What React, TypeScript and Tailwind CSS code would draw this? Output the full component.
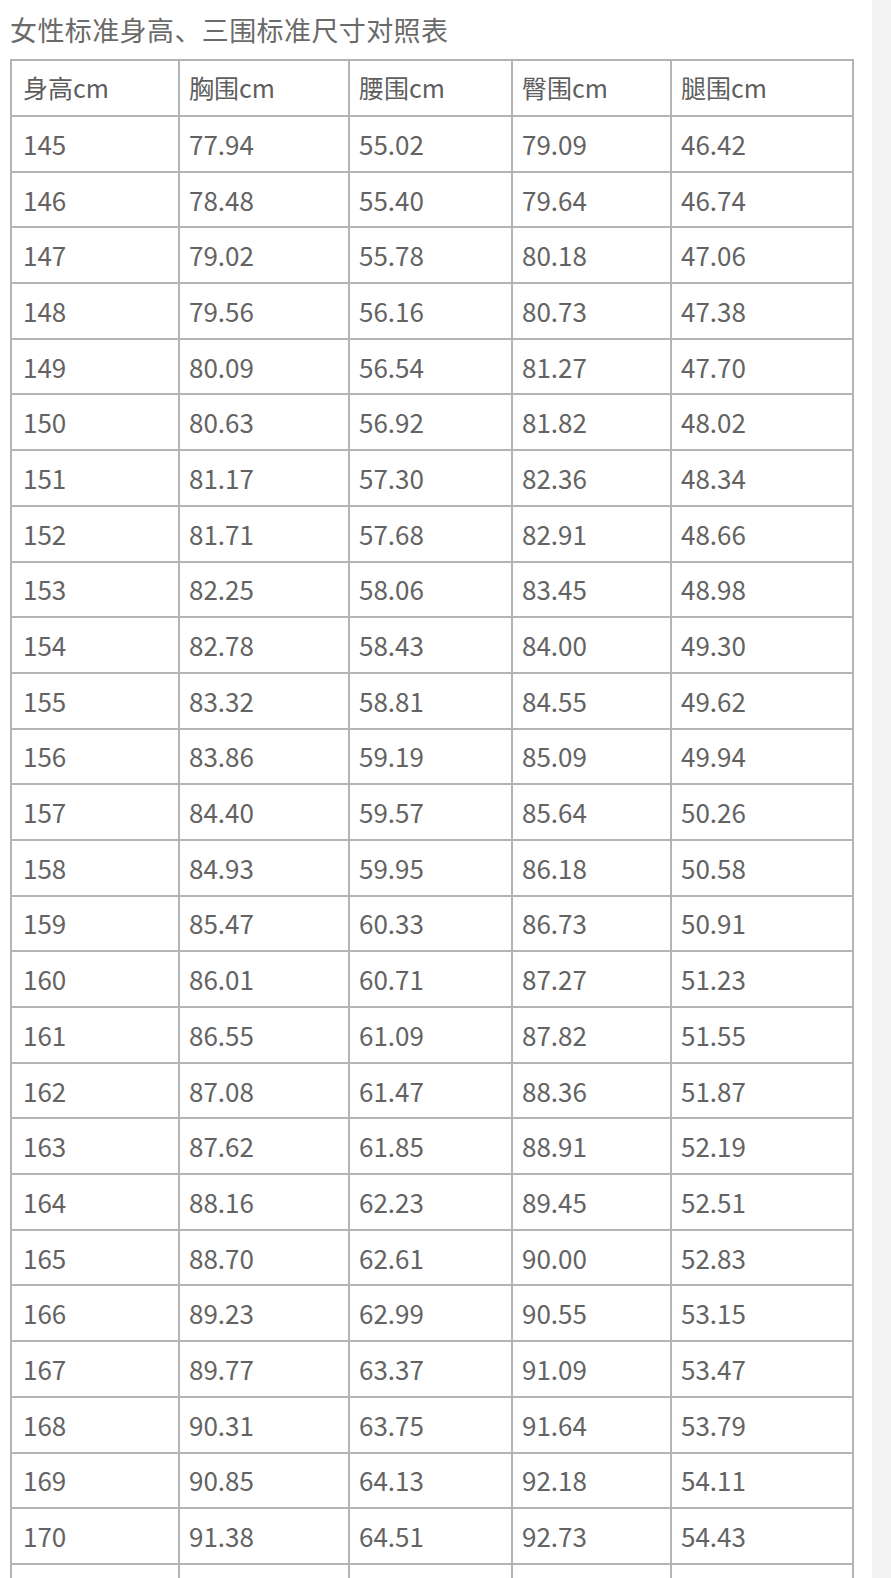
import React from "react";

const rows: string[][] = [
  ["145", "77.94", "55.02", "79.09", "46.42"],
  ["146", "78.48", "55.40", "79.64", "46.74"],
  ["147", "79.02", "55.78", "80.18", "47.06"],
  ["148", "79.56", "56.16", "80.73", "47.38"],
  ["149", "80.09", "56.54", "81.27", "47.70"],
  ["150", "80.63", "56.92", "81.82", "48.02"],
  ["151", "81.17", "57.30", "82.36", "48.34"],
  ["152", "81.71", "57.68", "82.91", "48.66"],
  ["153", "82.25", "58.06", "83.45", "48.98"],
  ["154", "82.78", "58.43", "84.00", "49.30"],
  ["155", "83.32", "58.81", "84.55", "49.62"],
  ["156", "83.86", "59.19", "85.09", "49.94"],
  ["157", "84.40", "59.57", "85.64", "50.26"],
  ["158", "84.93", "59.95", "86.18", "50.58"],
  ["159", "85.47", "60.33", "86.73", "50.91"],
  ["160", "86.01", "60.71", "87.27", "51.23"],
  ["161", "86.55", "61.09", "87.82", "51.55"],
  ["162", "87.08", "61.47", "88.36", "51.87"],
  ["163", "87.62", "61.85", "88.91", "52.19"],
  ["164", "88.16", "62.23", "89.45", "52.51"],
  ["165", "88.70", "62.61", "90.00", "52.83"],
  ["166", "89.23", "62.99", "90.55", "53.15"],
  ["167", "89.77", "63.37", "91.09", "53.47"],
  ["168", "90.31", "63.75", "91.64", "53.79"],
  ["169", "90.85", "64.13", "92.18", "54.11"],
  ["170", "91.38", "64.51", "92.73", "54.43"],
  ["", "", "", "", ""],
];

const headers = ["身高cm", "胸围cm", "腰围cm", "臀围cm", "腿围cm"];

export default function App() {
  return (
    <div
      className="flex h-[1578px] w-[891px] overflow-hidden bg-white text-[#636363]"
      style={{ fontFamily: '"Noto Sans CJK SC", "Noto Sans", sans-serif' }}
    >
      <div className="flex-1 pl-[10px]">
        <div className="h-[59px] pt-[12px] text-[27px] leading-[36px] tracking-[0.4px] text-[#6a6a6a]">
          女性标准身高、三围标准尺寸对照表
        </div>
        <table className="table-fixed border-collapse">
          <colgroup>
            <col className="w-[168px]" />
            <col className="w-[170px]" />
            <col className="w-[163px]" />
            <col className="w-[159px]" />
            <col className="w-[182px]" />
          </colgroup>
          <thead>
            <tr className="h-[56px]">
              {headers.map((h, i) => (
                <th
                  key={h}
                  className={`border-2 border-[#b4b4b4] ${i === 0 ? "pl-[11px]" : "pl-[9px]"} text-left align-middle text-[25px] font-normal text-[#5e5e5e]`}
                >
                  {h}
                </th>
              ))}
            </tr>
          </thead>
          <tbody>
            {rows.map((r, ri) => (
              <tr key={ri} className="h-[55.7px]">
                {r.map((c, i) => (
                  <td
                    key={i}
                    className={`border-2 border-[#b4b4b4] ${i === 0 ? "pl-[11px]" : "pl-[9px]"} align-middle text-[26px] leading-none`}
                  >
                    {c}
                  </td>
                ))}
              </tr>
            ))}
          </tbody>
        </table>
      </div>
      <div className="w-[19px] bg-[#f4f4f4]" />
    </div>
  );
}
